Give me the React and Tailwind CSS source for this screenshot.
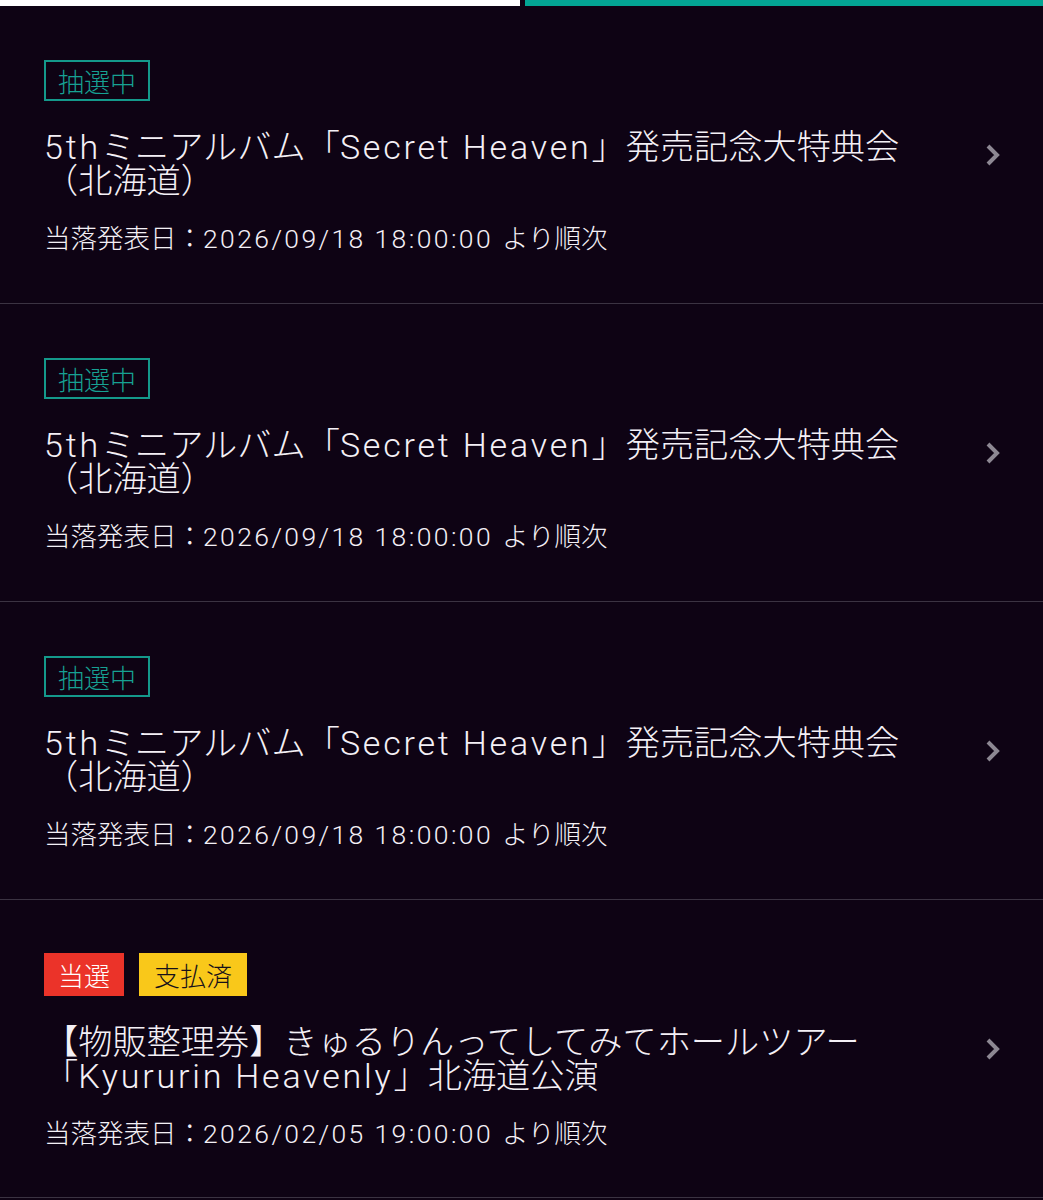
import React from "react";

const font = {
  fontFamily: '"Noto Sans CJK JP", "Noto Sans", sans-serif',
};

function Runs({ text, latCls }) {
  const parts = text.split(/([\x20-\x7E]+)/);
  return (
    <>
      {parts.map((p, i) =>
        i % 2 === 1 ? (
          <span key={i} className={latCls}>{p}</span>
        ) : (
          <span key={i}>{p}</span>
        )
      )}
    </>
  );
}

function Chevron() {
  return (
    <svg width="16" height="24" viewBox="0 0 16 24" className="shrink-0">
      <path d="M3 3 L12 12 L3 21" fill="none" stroke="#8d8893" strokeWidth="4" strokeLinecap="butt" strokeLinejoin="miter" />
    </svg>
  );
}

const titleLat = "font-['Roboto'] text-[34px] tracking-[2.8px] font-light";
const dateLat = "font-['Roboto'] text-[26.5px] tracking-[2.4px] font-light";

function Item({ badges, line1, line2, date }) {
  return (
    <div className="flex items-center h-[298px] border-b border-[#3b3342] pl-[44px] pr-[42px]">
      <div className="flex-1 flex flex-col pt-[2px]">
        <div className="flex gap-[15px]">
          {badges.map((b, i) => (
            <span key={i} className={b.cls}>{b.text}</span>
          ))}
        </div>
        <div className="mt-[26px] text-[34.2px] font-light text-[#f4f0f6] whitespace-nowrap">
          <div className="h-[34px] leading-[34px]"><Runs text={line1} latCls={titleLat} /></div>
          <div className="h-[34px] leading-[34px]"><Runs text={line2} latCls={titleLat} /></div>
        </div>
        <div className="mt-[27px] h-[30px] text-[26.5px] leading-[30px] font-light text-[#f4f0f6] whitespace-nowrap">
          <Runs text={date} latCls={dateLat} />
        </div>
      </div>
      <Chevron />
    </div>
  );
}

const lottery = {
  text: "抽選中",
  cls: "border-2 border-[#14998b] text-[#17a193] text-[26px] leading-[37px] px-[12px] font-light",
};
const won = {
  text: "当選",
  cls: "bg-[#eb3329] text-white text-[26px] leading-[43px] px-[14px] font-light",
};
const paid = {
  text: "支払済",
  cls: "bg-[#f9c81a] text-[#16101a] text-[26px] leading-[43px] px-[15px] font-light",
};

export default function App() {
  const t1 = "5thミニアルバム「Secret Heaven」発売記念大特典会";
  const t2 = "（北海道）";
  const d1 = "当落発表日：2026/09/18 18:00:00 より順次";
  return (
    <div className="w-[1043px] h-[1200px] bg-[#0e0314] overflow-hidden" style={font}>
      <div className="flex h-[6px] gap-[5px]">
        <div className="w-[520px] bg-white" />
        <div className="flex-1 bg-[#03a594]" />
      </div>
      <Item badges={[lottery]} line1={t1} line2={t2} date={d1} />
      <Item badges={[lottery]} line1={t1} line2={t2} date={d1} />
      <Item badges={[lottery]} line1={t1} line2={t2} date={d1} />
      <Item
        badges={[won, paid]}
        line1="【物販整理券】きゅるりんってしてみてホールツアー"
        line2="「Kyururin Heavenly」北海道公演"
        date="当落発表日：2026/02/05 19:00:00 より順次"
      />
    </div>
  );
}
